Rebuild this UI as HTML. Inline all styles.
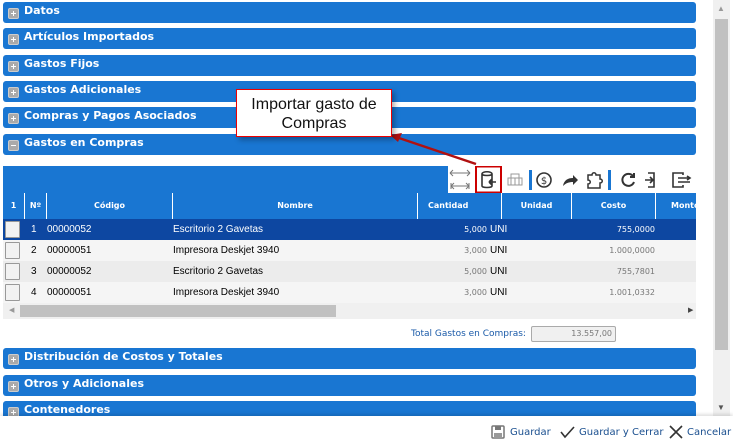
<!DOCTYPE html>
<html><head><meta charset="utf-8"><style>
*{box-sizing:border-box;margin:0;padding:0}
body{width:733px;height:445px;overflow:hidden;background:#fff;font-family:"Liberation Sans","DejaVu Sans",sans-serif;position:relative}
.p{position:absolute;left:3px;width:693px;height:21px;background:#1976d2;border-radius:3px;color:#fff;font:bold 11px "DejaVu Sans",sans-serif}
.p span{position:absolute;left:21px;top:2px}
.p i{position:absolute;left:5px;top:6px;width:11px;height:11px;background:#aaa;border:1px solid #ccc;border-radius:2px}
.p i:before{content:"";position:absolute;left:2px;top:4px;width:5px;height:1px;background:#fff}
.p i.pl:after{content:"";position:absolute;left:4px;top:2px;width:1px;height:5px;background:#fff}
.a{position:absolute}
.hd{position:absolute;top:193px;height:26px;background:#1976d2;color:#fff;font:bold 8px "DejaVu Sans",sans-serif;text-align:center;line-height:26px;border-left:1px solid #fff}
.r{position:absolute;left:3px;width:693px;height:21px;font-size:10px;line-height:21px}
.r .c{position:absolute;top:0}
.r .cb{position:absolute;left:2px;top:2px;width:15px;height:17px;background:#f2f2f2;border:1px solid #999;border-radius:1px}
.num{font:8px "DejaVu Sans",sans-serif;line-height:21px;color:#777;text-align:right}
.ft{position:absolute;top:427px;font:10px "DejaVu Sans",sans-serif;color:#1a4f8f}
</style></head><body>
<div class="p" style="top:2px"><i class="pl"></i><span>Datos</span></div>
<div class="p" style="top:28px"><i class="pl"></i><span>Artículos Importados</span></div>
<div class="p" style="top:55px"><i class="pl"></i><span>Gastos Fijos</span></div>
<div class="p" style="top:81px"><i class="pl"></i><span>Gastos Adicionales</span></div>
<div class="p" style="top:107px"><i class="pl"></i><span>Compras y Pagos Asociados</span></div>
<div class="p" style="top:134px"><i></i><span>Gastos en Compras</span></div>

<div class="a" style="left:3px;top:166px;width:445px;height:27px;background:#1976d2"></div>
<div class="a" style="left:448px;top:166px;width:248px;height:27px;background:#fff"></div>
<svg class="a" style="left:448px;top:166px" width="248" height="27" viewBox="0 0 248 27" fill="none" stroke="#555" stroke-width="1.3">
<path d="M2 7h20M2 7l3-3M2 7l3 3M22 7l-3-3M22 7l-3 3M3 20h18M3 17v6M21 17v6M3 20l3-3M3 20l3 3M21 20l-3-3M21 20l-3 3" stroke="#777" stroke-width="1"/>
<rect x="28" y="0.5" width="25" height="26" stroke="#c00" stroke-width="2"/>
<path d="M34 8c0-3 10-3 10 0v12c0 2-10 2-10 0zM34 8c0 2 10 2 10 0M48 16h-7M41 16l3-3M41 16l3 3" stroke="#333" stroke-width="1.6"/>
<path d="M60 12h14v7h-14zM63 12v7M67 12v7M71 12v7M63 12v-4h8v4" stroke="#999" stroke-width="1"/>
<rect x="81" y="4" width="3" height="20" fill="#1976d2" stroke="none"/>
<circle cx="96" cy="14" r="7" stroke="#333" stroke-width="1.6"/>
<text x="96" y="18" font-size="10" font-family="DejaVu Sans" fill="#333" stroke="none" text-anchor="middle">$</text>
<path d="M115 20c1-6 5-8 10-8v-3l5 5-5 5v-3c-4 0-7 1-10 4z" fill="#333" stroke="none"/>
<path d="M140 9h4c0-3 4-3 4 0h4v4c3 0 3 4 0 4v5h-12v-4c3 0 3-4 0-4z" stroke="#333" stroke-width="1.5"/>
<rect x="160" y="4" width="3" height="20" fill="#1976d2" stroke="none"/>
<path d="M185 10a6 6 0 1 0 1 6M186 7v4h-4" stroke="#333" stroke-width="2"/>
<path d="M200 7h6v14h-6M197 14h8M202 11l3 3-3 3" stroke="#333" stroke-width="1.6"/>
<path d="M235 9v-2h-10v14h10v-2M230 12h12M230 16h12M239 10l3 2-3 2" stroke="#333" stroke-width="1.6"/>
</svg>

<div class="hd" style="left:3px;width:21px;border-left:0">1</div>
<div class="hd" style="left:24px;width:22px">Nº</div>
<div class="hd" style="left:46px;width:126px">Código</div>
<div class="hd" style="left:172px;width:245px">Nombre</div>
<div class="hd" style="left:417px;width:84px;text-align:left;padding-left:10px">Cantidad</div>
<div class="hd" style="left:501px;width:70px">Unidad</div>
<div class="hd" style="left:571px;width:84px">Costo</div>
<div class="hd" style="left:655px;width:41px;text-align:left;padding-left:15px">Monto</div>

<div class="r" style="top:219px;background:#0d47a1;color:#fff"><div class="cb"></div><div class="c" style="left:28px">1</div><div class="c" style="left:44px">00000052</div><div class="c" style="left:170px">Escritorio 2 Gavetas</div><div class="c num" style="left:420px;width:64px;color:#fff">5,000</div><div class="c" style="left:487px">UNI</div><div class="c num" style="left:560px;width:92px;color:#fff">755,0000</div></div>
<div class="r" style="top:240px;background:#f5f5f5"><div class="cb"></div><div class="c" style="left:28px">2</div><div class="c" style="left:44px">00000051</div><div class="c" style="left:170px">Impresora Deskjet 3940</div><div class="c num" style="left:420px;width:64px">3,000</div><div class="c" style="left:487px">UNI</div><div class="c num" style="left:560px;width:92px">1.000,0000</div></div>
<div class="r" style="top:261px;background:#ececec"><div class="cb"></div><div class="c" style="left:28px">3</div><div class="c" style="left:44px">00000052</div><div class="c" style="left:170px">Escritorio 2 Gavetas</div><div class="c num" style="left:420px;width:64px">5,000</div><div class="c" style="left:487px">UNI</div><div class="c num" style="left:560px;width:92px">755,7801</div></div>
<div class="r" style="top:282px;background:#f5f5f5"><div class="cb"></div><div class="c" style="left:28px">4</div><div class="c" style="left:44px">00000051</div><div class="c" style="left:170px">Impresora Deskjet 3940</div><div class="c num" style="left:420px;width:64px">3,000</div><div class="c" style="left:487px">UNI</div><div class="c num" style="left:560px;width:92px">1.001,0332</div></div>
<div class="a" style="left:3px;top:303px;width:693px;height:16px;background:#f0f0f0"></div>
<div class="a" style="left:20px;top:305px;width:316px;height:12px;background:#c1c1c1"></div>
<div class="a" style="left:9px;top:306px;font-size:7px;color:#999">◀</div>
<div class="a" style="left:688px;top:306px;font-size:7px;color:#444">▶</div>

<div class="a" style="left:411px;top:329px;font:9px 'DejaVu Sans',sans-serif;color:#1a5aa8">Total Gastos en Compras:</div>
<div class="a" style="left:531px;top:326px;width:85px;height:16px;background:#f0f0f0;border:1px solid #aaa;border-radius:2px;font:8px 'DejaVu Sans',sans-serif;color:#777;text-align:right;padding-right:3px;line-height:14px">13.557,00</div>

<div class="p" style="top:348px"><i class="pl"></i><span>Distribución de Costos y Totales</span></div>
<div class="p" style="top:375px"><i class="pl"></i><span>Otros y Adicionales</span></div>
<div class="p" style="top:401px;height:15px;border-radius:3px 3px 0 0"><i class="pl"></i><span>Contenedores</span></div>

<div class="a" style="left:713px;top:0;width:17px;height:416px;background:#f0f0f0"></div>
<div class="a" style="left:715px;top:19px;width:13px;height:331px;background:#c1c1c1"></div>
<div class="a" style="left:717px;top:4px;font-size:8px;color:#999">▲</div>
<div class="a" style="left:717px;top:403px;font-size:8px;color:#555">▼</div>

<div class="a" style="left:0;top:416px;width:733px;height:29px;background:#fff;box-shadow:0 -2px 3px rgba(0,0,0,.12)"></div>
<svg class="a" style="left:491px;top:425px" width="14" height="14" viewBox="0 0 14 14"><rect x="1" y="1" width="12" height="12" rx="1" fill="none" stroke="#777" stroke-width="1.5"/><rect x="4" y="1" width="6" height="4" fill="#777"/><rect x="3" y="8" width="8" height="5" fill="#999"/></svg>
<div class="ft" style="left:510px">Guardar</div>
<svg class="a" style="left:560px;top:425px" width="15" height="14"><path d="M1 7l4 5L14 2" fill="none" stroke="#333" stroke-width="1.6"/></svg>
<div class="ft" style="left:579px">Guardar y Cerrar</div>
<svg class="a" style="left:669px;top:425px" width="14" height="14"><path d="M1 1l12 12M13 1L1 13" stroke="#333" stroke-width="1.6"/></svg>
<div class="ft" style="left:687px">Cancelar</div>

<svg class="a" style="left:380px;top:125px" width="110" height="45"><path d="M96 39L16 12" stroke="#b01010" stroke-width="2.5"/><path d="M10 10l12-2-4 9z" fill="#b01010"/></svg>
<div class="a" style="left:236px;top:89px;width:156px;height:48px;background:#fff;border:1px solid #e00;box-shadow:3px 3px 5px rgba(0,0,0,.3);text-align:center;font:16px 'Liberation Sans',sans-serif;line-height:19px;padding-top:5px;color:#111">Importar gasto de<br>Compras</div>
</body></html>
